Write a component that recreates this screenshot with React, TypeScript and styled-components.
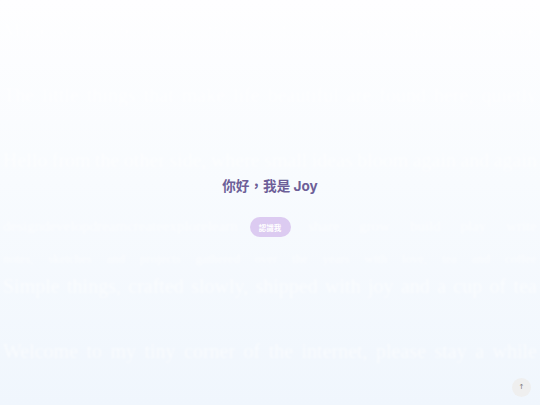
import styled, { createGlobalStyle } from "styled-components"

const GlobalStyle = createGlobalStyle`
  html, body {
    margin: 0;
    padding: 0;
    height: 100%;
  }
  #root {
    height: 100%;
  }
  body {
    font-family: "Inter", "Noto Sans CJK TC", sans-serif;
  }
`

const ghostLines = [
  { top: 20, size: 20, words: "Made with care and a little bit of code, every day of the week", split: false },
  { top: 85, size: 20, words: "The little things that make life beautiful are found here, quietly", split: false },
  { top: 150, size: 20, words: "Hello from the other side, where small ideas bloom again and again", split: false },
  { top: 219, size: 15, words: "design develop dream create explore learn share grow build play write", split: true },
  { top: 252, size: 13, words: "notes, sketches and projects gathered over the years with love, tea and coffee", split: false },
  { top: 276, size: 20, words: "Simple things, crafted slowly, shipped with joy and a cup of tea", split: false },
  { top: 341, size: 20, words: "Welcome to my tiny corner of the internet, please stay a while", split: false },
]

const App = () => {
  return <>
    <GlobalStyle />
    <Page>
      <Ghost aria-hidden>
        {ghostLines.map((l, i) => {
          const words = l.words.split(" ")
          const half = Math.ceil(words.length / 2)
          return <GhostLine key={i} $top={l.top} $size={l.size} $split={l.split}>
            {l.split
              ? <>
                  <GhostHalf>{words.slice(0, half).map((w, j) => <span key={j}>{w}</span>)}</GhostHalf>
                  <GhostHalf>{words.slice(half).map((w, j) => <span key={j}>{w}</span>)}</GhostHalf>
                </>
              : words.map((w, j) => <span key={j}>{w}</span>)}
          </GhostLine>
        })}
      </Ghost>
      <Hero>
        <Title>你好，我是 Joy</Title>
        <MeetButton>認識我</MeetButton>
      </Hero>
      <Footer>
        <ToTop>↑</ToTop>
      </Footer>
    </Page>
  </>
}

const Page = styled.div`
  height: 100vh;
  display: grid;
  grid-template-columns: 100%;
  grid-template-rows: 1fr auto;
  overflow: hidden;
  background: linear-gradient(180deg, #fefeff 0%, #f8fbfe 45%, #f0f6fd 100%);
`

const Ghost = styled.div`
  grid-area: 1 / 1 / 3 / 2;
  display: flex;
  flex-direction: column;
  pointer-events: none;
  filter: blur(1px);
  padding: 0 3px;
  min-width: 0;
`

const GhostLine = styled.div<{ $top: number; $size: number; $split: boolean }>`
  position: relative;
  top: ${p => p.$top}px;
  height: 0;
  display: flex;
  justify-content: space-between;
  gap: ${p => (p.$split ? "70px" : "0")};
  white-space: nowrap;
  font-family: "Liberation Serif", serif;
  font-size: ${p => p.$size}px;
  line-height: 1;
  color: rgba(255, 255, 255, 0.6);
`

const GhostHalf = styled.div`
  flex: 1;
  display: flex;
  justify-content: space-between;
`

const Hero = styled.div`
  grid-area: 1 / 1 / 2 / 2;
  z-index: 1;
  display: flex;
  flex-direction: column;
  align-items: center;
  justify-content: flex-start;
  padding-top: 177px;
  gap: 21px;
`

const Title = styled.h1`
  margin: 0;
  font-size: 13.6px;
  line-height: 19px;
  font-weight: 700;
  color: #6d5f98;
`

const MeetButton = styled.button`
  border: none;
  border-radius: 999px;
  background: #dccbf1;
  color: #ffffff;
  font-family: "Noto Sans CJK TC", sans-serif;
  font-size: 7.5px;
  font-weight: 700;
  height: 20px;
  width: 41px;
  padding: 0;
  cursor: pointer;
`

const Footer = styled.div`
  grid-area: 2 / 1 / 3 / 2;
  z-index: 1;
  display: flex;
  justify-content: flex-end;
  padding: 0 9px 8px 0;
`

const ToTop = styled.button`
  width: 19px;
  height: 19px;
  border-radius: 50%;
  border: none;
  background: #efefef;
  color: #777;
  font-size: 7px;
  line-height: 19px;
  padding: 0;
  font-family: "DejaVu Sans", sans-serif;
`

export default App
